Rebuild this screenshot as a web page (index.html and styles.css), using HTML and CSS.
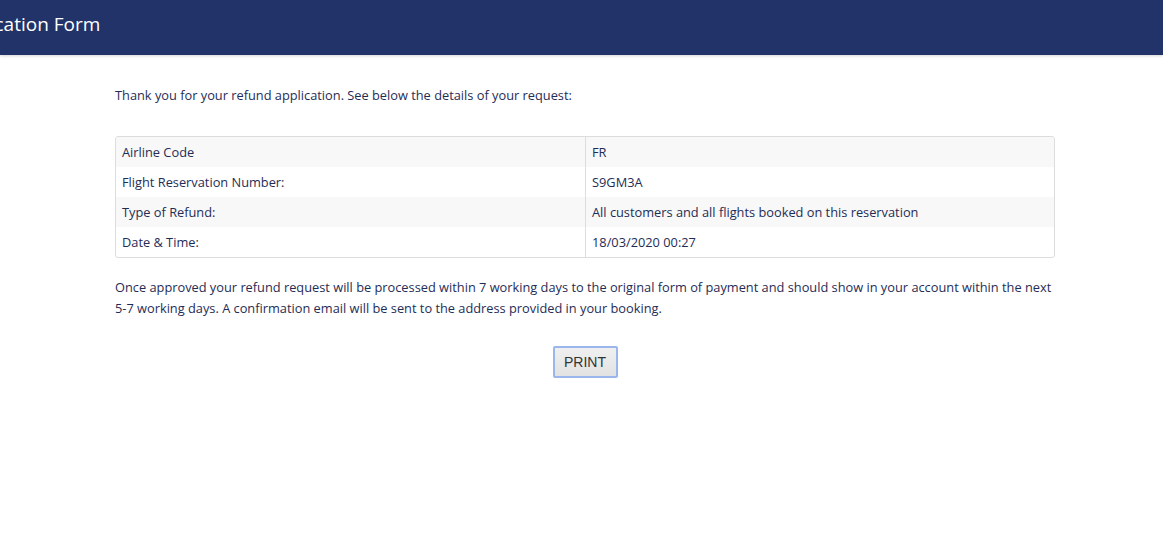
FILE: index.html
```html
<!DOCTYPE html>
<html>
<head>
<meta charset="utf-8">
<link rel="stylesheet" href="styles.css">
</head>
<body>
<header class="topbar">
  <h1 class="title">Refund Application Form</h1>
</header>
<main class="content">
  <p class="intro">Thank you for your refund application. See below the details of your request:</p>
  <table class="details">
    <tr><td>Airline Code</td><td>FR</td></tr>
    <tr><td>Flight Reservation Number:</td><td>S9GM3A</td></tr>
    <tr><td>Type of Refund:</td><td>All customers and all flights booked on this reservation</td></tr>
    <tr><td>Date &amp; Time:</td><td>18/03/2020 00:27</td></tr>
  </table>
  <p class="note">Once approved your refund request will be processed within 7 working days to the original form of payment and should show in your account within the next 5-7 working days. A confirmation email will be sent to the address provided in your booking.</p>
  <div class="actions"><button class="print">PRINT</button></div>
</main>
</body>
</html>
```
FILE: styles.css
```css
html, body { margin: 0; padding: 0; background: #fff; }
body { font-family: "Open Sans", "DejaVu Sans", sans-serif; color: #1f2d56; }
.topbar {
  height: 55px;
  background: #213368;
  box-shadow: 0 1px 3px rgba(0,0,0,0.18);
  overflow: hidden;
  display: flex;
  align-items: center;
}
.title {
  margin: 0 0 0 -119px;
  color: #fff;
  font-weight: 400;
  font-size: 19px;
  white-space: nowrap;
  position: relative;
  top: -4px;
}
.content { width: 940px; margin-left: 115px; padding-top: 30px; font-size: 12.8px; }
.intro { margin: 0; line-height: 21px; }
.details {
  margin-top: 30px;
  width: 100%;
  border-collapse: separate;
  border-spacing: 0;
  border: 1px solid #ddd;
  border-radius: 3px;
}
.details td { height: 30px; padding: 0 6px; line-height: 20px; }
.details td:first-child { width: 457px; border-right: 1px solid #ddd; }
.details tr:nth-child(odd) td { background: #f8f8f8; }
.details tr:first-child td:first-child { border-top-left-radius: 3px; }
.details tr:first-child td:last-child { border-top-right-radius: 3px; }
.note { margin: 19px 0 0; line-height: 21px; }
.actions { display: flex; justify-content: center; padding-top: 27px; }
.print {
  width: 65px; height: 32px;
  font-family: "Liberation Sans", Arial, sans-serif;
  font-size: 14px; color: #333;
  background: linear-gradient(#f0f0f0, #e2e2e2);
  border: 2px solid #9ab6ea;
  border-radius: 2px;
}
```
